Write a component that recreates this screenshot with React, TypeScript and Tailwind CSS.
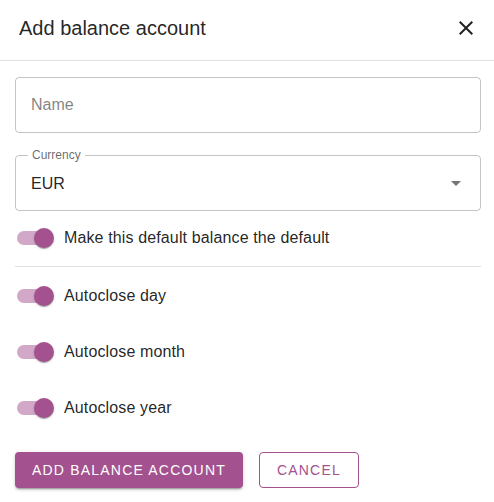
import { useState } from 'react';

function Toggle({ label }: { label: string }) {
  const [on, setOn] = useState(true);
  return (
    <label className="flex items-center h-[38px] cursor-pointer select-none">
      <span className="relative w-[58px] h-[38px] p-3 shrink-0" onClick={() => setOn(!on)}>
        <span className={`block w-[34px] h-[14px] rounded-full ${on ? 'bg-[#a4518f]/50' : 'bg-black/40'}`} />
        <span
          className={`absolute top-[9px] w-5 h-5 rounded-full shadow-[0_2px_1px_-1px_rgba(0,0,0,0.2),0_1px_1px_0_rgba(0,0,0,0.14),0_1px_3px_0_rgba(0,0,0,0.12)] ${
            on ? 'left-[29px] bg-[#a4518f]' : 'left-[9px] bg-white'
          }`}
        />
      </span>
      <span className="ml-[1px] text-base tracking-[0.13px] text-black/[0.87]">{label}</span>
    </label>
  );
}

export default function App() {
  return (
    <div className="w-[494px] h-[502px] bg-white font-['Liberation_Sans',Arial,sans-serif] text-black/[0.87]">
      <div className="h-[61px] flex items-center justify-between pl-[19px] pr-[14px] border-b border-[#e0e0e0]">
        <h2 className="text-xl font-normal pb-[5px]">Add balance account</h2>
        <button className="w-7 h-7 flex items-center justify-center mb-[5px]">
          <svg width="24" height="24" viewBox="0 0 24 24" fill="currentColor">
            <path d="M19 6.41 17.59 5 12 10.59 6.41 5 5 6.41 10.59 12 5 17.59 6.41 19 12 13.41 17.59 19 19 17.59 13.41 12z" />
          </svg>
        </button>
      </div>

      <div className="pl-[15px] pr-[13px] pt-4">
        <div className="h-[56px] rounded border border-black/[0.23] flex items-center px-[15px]">
          <span className="text-base text-black/[0.5]">Name</span>
        </div>

        <div className="relative mt-[22px] h-[56px] rounded border border-black/[0.23] flex items-center justify-between pl-[15px] pr-[19px]">
          <span className="absolute -top-[9px] left-[12px] bg-white px-[4px] text-xs text-black/60 leading-4">Currency</span>
          <span className="text-base pt-[2px]">EUR</span>
          <svg width="10" height="5" viewBox="0 0 10 5" className="text-black/[0.54]" fill="currentColor">
            <path d="M0 0l5 5 5-5z" />
          </svg>
        </div>

        <div className="mt-[8px] -ml-[10px]">
          <Toggle label="Make this default balance the default" />
        </div>
        <div className="mt-[9px] border-t border-[#e0e0e0]" />

        <div className="-ml-[10px] mt-[10px] flex flex-col gap-[18px]">
          <Toggle label="Autoclose day" />
          <Toggle label="Autoclose month" />
          <Toggle label="Autoclose year" />
        </div>

        <div className="mt-[25px] flex gap-4">
          <button className="h-9 px-[17px] rounded bg-[#a4518f] text-white text-sm font-normal uppercase tracking-[1.2px] shadow-[0_3px_1px_-2px_rgba(0,0,0,0.2),0_2px_2px_0_rgba(0,0,0,0.14),0_1px_5px_0_rgba(0,0,0,0.12)]">
            Add balance account
          </button>
          <button className="h-9 px-[17px] rounded border border-[#a4518f] text-[#a4518f] text-sm font-normal uppercase tracking-[1.2px]">
            Cancel
          </button>
        </div>
      </div>
    </div>
  );
}
